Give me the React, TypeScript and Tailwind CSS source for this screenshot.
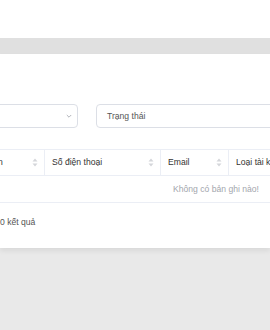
import React from "react";

function SortIcon() {
  return (
    <svg width="6" height="9" viewBox="0 0 6 9" className="shrink-0">
      <path d="M3 0.5 L5.5 3.5 L0.5 3.5 Z" fill="#d4d6da" />
      <path d="M3 8.5 L5.5 5.5 L0.5 5.5 Z" fill="#d4d6da" />
    </svg>
  );
}

function HeaderCell({ label, width, divider = true, sort = true }: { label: string; width: string; divider?: boolean; sort?: boolean }) {
  return (
    <div className={`${width} h-full flex items-center justify-between pl-[7px] pr-[6px] ${divider ? "border-r border-[#ebeef5]" : ""} shrink-0`}>
      <span className="text-[#333] whitespace-nowrap">{label}</span>
      {sort && <SortIcon />}
    </div>
  );
}

export default function App() {
  return (
    <div
      className="w-[270px] h-[330px] overflow-hidden bg-[#e9e9e9] text-[8.6px]"
      style={{ fontFamily: '"Liberation Sans", Arial, sans-serif' }}
    >
      <div className="h-[38px] bg-white" />
      <div className="h-[16px] bg-[#e0e0e0]" />
      <div className="h-[194px] bg-white shadow-[0_3px_5px_rgba(0,0,0,0.07)] overflow-hidden">
        <div className="ml-[-100px] w-[632px] pt-[50px]">
          <div className="flex gap-[18px]">
            <div className="w-[178px] h-[24px] border border-[#dcdfe6] rounded-[4px] flex items-center justify-end pr-[4px]">
              <svg width="8" height="8" viewBox="0 0 8 8">
                <path d="M1.8 3 L4 5.2 L6.2 3" fill="none" stroke="#a8abb2" strokeWidth="0.9" />
              </svg>
            </div>
            <div className="w-[300px] h-[24px] border border-[#dcdfe6] rounded-[4px] flex items-center pl-[10px] text-[#555]">
              Trạng thái
            </div>
          </div>
          <div className="mt-[21px] h-[27px] border-t border-b border-[#ebeef5] flex">
            <HeaderCell label="STT" width="w-[81px]" sort={false} />
            <HeaderCell label="Tên" width="w-[64px]" />
            <HeaderCell label="Số điện thoại" width="w-[116px]" />
            <HeaderCell label="Email" width="w-[68px]" />
            <HeaderCell label="Loại tài khoản" width="w-[140px]" />
            <HeaderCell label="" width="flex-1" divider={false} sort={false} />
          </div>
          <div className="h-[27px] border-b border-[#ebeef5] flex items-center justify-center text-[#a3a6ad]">
            Không có bản ghi nào!
          </div>
          <div className="pl-[100px] mt-[13px] text-[#555] leading-[12px]">0 kết quả</div>
        </div>
      </div>
    </div>
  );
}
